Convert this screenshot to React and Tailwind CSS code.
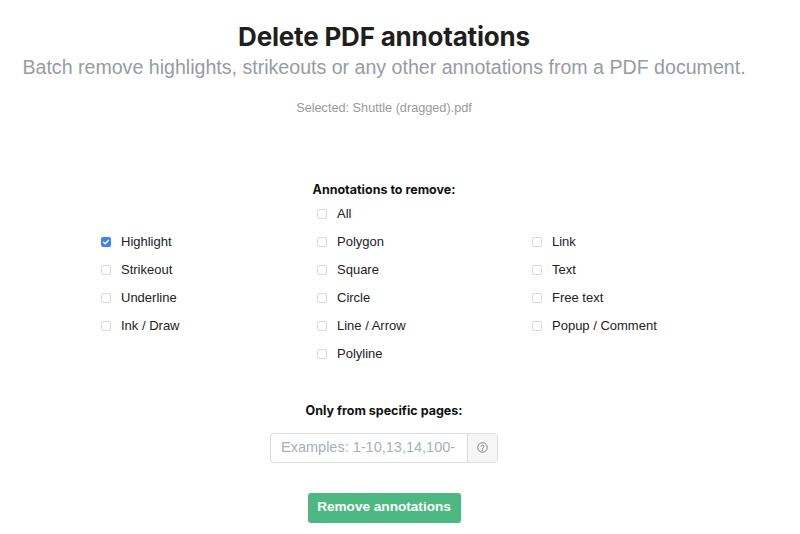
import React from 'react';

const col1 = [
  { label: 'Highlight', checked: true },
  { label: 'Strikeout' },
  { label: 'Underline' },
  { label: 'Ink / Draw' },
];
const col2 = [
  { label: 'All' },
  { label: 'Polygon' },
  { label: 'Square' },
  { label: 'Circle' },
  { label: 'Line / Arrow' },
  { label: 'Polyline' },
];
const col3 = [{ label: 'Link' }, { label: 'Text' }, { label: 'Free text' }, { label: 'Popup / Comment' }];

function Check({ label, checked }) {
  return (
    <label className="flex items-center h-[28px] gap-[10px] text-[13px] text-[#222]">
      {checked ? (
        <span className="w-[10px] h-[10px] rounded-[2px] bg-[#3b82f6] flex items-center justify-center">
          <svg width="8" height="8" viewBox="0 0 8 8" fill="none">
            <path d="M1.5 4.2 3.2 5.8 6.5 2.2" stroke="white" strokeWidth="1.4" strokeLinecap="round" strokeLinejoin="round" />
          </svg>
        </span>
      ) : (
        <span className="w-[10px] h-[10px] rounded-[2px] border border-[#d9d9d9] bg-white" />
      )}
      <span>{label}</span>
    </label>
  );
}

export default function App() {
  return (
    <div className="w-[768px] bg-white min-h-[534px] flex flex-col items-center pt-[20px]" style={{ fontFamily: '"Liberation Sans", Arial, sans-serif' }}>
      <h1 className="text-[26px] font-bold text-[#1f1f1f] leading-[34px] tracking-[-0.2px]" style={{ fontFamily: 'Inter, sans-serif' }}>
        Delete PDF annotations
      </h1>
      <p className="text-[19.6px] text-[#959ca3] leading-[26px] whitespace-nowrap">
        Batch remove highlights, strikeouts or any other annotations from a PDF document.
      </p>
      <p className="text-[12.7px] text-[#9a9a9a] mt-[19px]">Selected: Shuttle (dragged).pdf</p>

      <h2 className="text-[12.5px] font-bold text-[#111] mt-[63px]" style={{ fontFamily: 'Inter, sans-serif' }}>
        Annotations to remove:
      </h2>
      <div className="self-start ml-[101px] flex">
        <div className="w-[216px] pt-[28px]">
          {col1.map((c) => (
            <Check key={c.label} {...c} />
          ))}
        </div>
        <div className="w-[215px]">
          {col2.map((c) => (
            <Check key={c.label} {...c} />
          ))}
        </div>
        <div className="pt-[28px]">
          {col3.map((c) => (
            <Check key={c.label} {...c} />
          ))}
        </div>
      </div>

      <h2 className="text-[12.5px] font-bold text-[#111] mt-[34px]" style={{ fontFamily: 'Inter, sans-serif' }}>
        Only from specific pages:
      </h2>
      <div className="flex mt-[12px] h-[30px] w-[228px] border border-[#dcdcdc] rounded-[4px] overflow-hidden">
        <input
          className="flex-1 min-w-0 px-[10px] text-[14.5px] outline-none placeholder:text-[#a7b0bb]"
          placeholder="Examples: 1-10,13,14,100-"
        />
        <div className="w-[30px] border-l border-[#dcdcdc] bg-[#f6f6f6] flex items-center justify-center">
          <svg width="11" height="11" viewBox="0 0 12 12" fill="none" stroke="#777" strokeWidth="1">
            <circle cx="6" cy="6" r="5.2" />
            <path d="M4.4 4.6a1.7 1.7 0 0 1 3.3.4c0 1.1-1.7 1.3-1.7 2.3" strokeLinecap="round" />
            <circle cx="6" cy="8.9" r="0.35" fill="#777" />
          </svg>
        </div>
      </div>

      <button className="mt-[30px] h-[30px] w-[153px] rounded-[3px] bg-[#4db882] text-white text-[13.6px] font-bold whitespace-nowrap">
        Remove annotations
      </button>
    </div>
  );
}
